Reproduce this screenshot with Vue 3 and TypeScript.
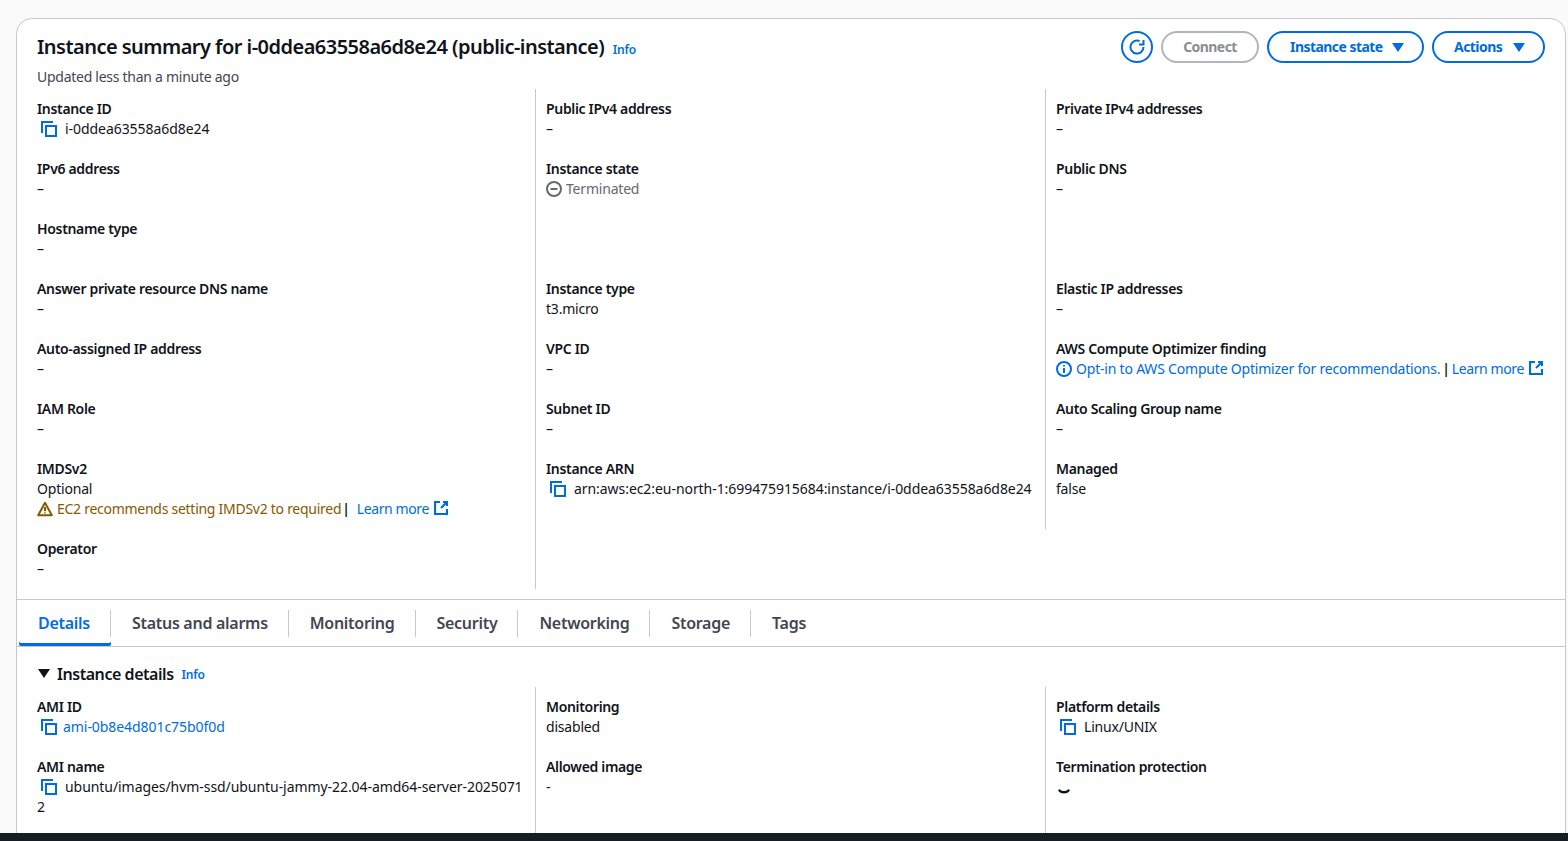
<template>
  <div class="page">
    <main class="main">
      <section class="card">
        <header class="head">
          <div>
            <h1 class="title">
              Instance summary for i-0ddea63558a6d8e24 (public-instance)
              <a class="info">Info</a>
            </h1>
            <p class="updated">Updated less than a minute ago</p>
          </div>
          <div class="actions">
            <button class="btn btn-icon" aria-label="Refresh">
              <svg width="16" height="16" viewBox="0 0 16 16" fill="none" stroke="currentColor" stroke-width="2">
                <path d="M10.6 2.1A6.5 6.5 0 1 0 14.5 8" />
                <path d="M14.5 1v4.5H10" />
              </svg>
            </button>
            <button class="btn btn-off">Connect</button>
            <button class="btn btn-menu btn-state">Instance state <i class="caret"></i></button>
            <button class="btn btn-menu btn-more">Actions <i class="caret"></i></button>
          </div>
        </header>

        <div class="grid summary">
          <div class="col col-first">
            <div class="field">
              <div class="label">Instance ID</div>
              <div class="value code"><svg class="copy" viewBox="0 0 16 16"><path d="M1 12V1h11" /><path d="M5 5h10v10H5z" /></svg>i-0ddea63558a6d8e24</div>
            </div>
            <div v-for="f in col1" :key="f" class="field">
              <div class="label">{{ f }}</div>
              <div class="value">–</div>
            </div>
            <div class="field">
              <div class="label">IMDSv2</div>
              <div class="value">Optional</div>
              <div class="value warn">
                <svg class="state" viewBox="0 0 16 16" fill="none" stroke="currentColor" stroke-width="2" stroke-linejoin="round">
                  <path d="M8 1.8 1.2 14.2h13.6z" />
                  <path d="M8 6v4.2M8 11.4v1.2" />
                </svg>
                <span class="warn-text">EC2 recommends setting IMDSv2 to required</span>
                <span class="pipe pipe-wide">|</span>
                <a class="link more">Learn more</a>
                <svg class="ext" viewBox="1 1 14 14" fill="none" stroke="currentColor" stroke-width="2.2"><path d="M7 2H2v12h12V9" /><path d="M10 2h4v4M14 2 8 8" /></svg>
              </div>
            </div>
            <div class="field">
              <div class="label">Operator</div>
              <div class="value">–</div>
            </div>
          </div>

          <div class="col">
            <div class="field">
              <div class="label">Public IPv4 address</div>
              <div class="value">–</div>
            </div>
            <div class="field">
              <div class="label">Instance state</div>
              <div class="value muted">
                <svg class="state" viewBox="0 0 16 16" fill="none" stroke="currentColor" stroke-width="2"><circle cx="8" cy="8" r="7" /><path d="M4.5 8h7" /></svg>
                <span class="state-text">Terminated</span>
              </div>
            </div>
            <div class="field field-blank"></div>
            <div class="field">
              <div class="label">Instance type</div>
              <div class="value">t3.micro</div>
            </div>
            <div class="field">
              <div class="label">VPC ID</div>
              <div class="value">–</div>
            </div>
            <div class="field">
              <div class="label">Subnet ID</div>
              <div class="value">–</div>
            </div>
            <div class="field">
              <div class="label">Instance ARN</div>
              <div class="value code"><svg class="copy" viewBox="0 0 16 16"><path d="M1 12V1h11" /><path d="M5 5h10v10H5z" /></svg>arn:aws:ec2:eu-north-1:699475915684:instance/i-0ddea63558a6d8e24</div>
            </div>
          </div>

          <div class="col col-short">
            <div class="field">
              <div class="label">Private IPv4 addresses</div>
              <div class="value">–</div>
            </div>
            <div class="field">
              <div class="label">Public DNS</div>
              <div class="value">–</div>
            </div>
            <div class="field field-blank"></div>
            <div class="field">
              <div class="label">Elastic IP addresses</div>
              <div class="value">–</div>
            </div>
            <div class="field">
              <div class="label">AWS Compute Optimizer finding</div>
              <div class="value opt">
                <svg class="state" viewBox="0 0 16 16" fill="none" stroke="currentColor" stroke-width="2"><circle cx="8" cy="8" r="7" /><path d="M8 7v5M8 4v1.6" /></svg>
                <a class="link opt-text">Opt-in to AWS Compute Optimizer for recommendations.</a>
                <span class="pipe">|</span>
                <a class="link more">Learn more</a>
                <svg class="ext" viewBox="1 1 14 14" fill="none" stroke="currentColor" stroke-width="2.2"><path d="M7 2H2v12h12V9" /><path d="M10 2h4v4M14 2 8 8" /></svg>
              </div>
            </div>
            <div class="field">
              <div class="label">Auto Scaling Group name</div>
              <div class="value">–</div>
            </div>
            <div class="field">
              <div class="label">Managed</div>
              <div class="value">false</div>
            </div>
          </div>
        </div>

        <nav class="tabs">
          <div v-for="(t, i) in tabs" :key="t" class="tab" :class="{ active: i === 0 }">
            <span class="tab-inner">{{ t }}</span>
          </div>
        </nav>

        <div class="section-head">
          <i class="section-caret"></i>
          <h2 class="section-title">Instance details</h2>
          <a class="info">Info</a>
        </div>

        <div class="grid details">
          <div class="col col-first">
            <div class="field">
              <div class="label">AMI ID</div>
              <div class="value code"><svg class="copy copy-tight" viewBox="0 0 16 16"><path d="M1 12V1h11" /><path d="M5 5h10v10H5z" /></svg><a class="link">ami-0b8e4d801c75b0f0d</a></div>
            </div>
            <div class="field">
              <div class="label">AMI name</div>
              <div class="value code wrap"><svg class="copy" viewBox="0 0 16 16"><path d="M1 12V1h11" /><path d="M5 5h10v10H5z" /></svg>ubuntu/images/hvm-ssd/ubuntu-jammy-22.04-amd64-server-20250712</div>
            </div>
          </div>
          <div class="col">
            <div class="field">
              <div class="label">Monitoring</div>
              <div class="value">disabled</div>
            </div>
            <div class="field">
              <div class="label">Allowed image</div>
              <div class="value">-</div>
            </div>
          </div>
          <div class="col">
            <div class="field">
              <div class="label">Platform details</div>
              <div class="value"><svg class="copy" viewBox="0 0 16 16"><path d="M1 12V1h11" /><path d="M5 5h10v10H5z" /></svg>Linux/UNIX</div>
            </div>
            <div class="field">
              <div class="label">Termination protection</div>
              <div class="value">
                <svg class="spin" viewBox="0 0 16 16" fill="none" stroke="currentColor" stroke-width="2.4" stroke-linecap="round"><path d="M3.5 9.5c2 2.4 7 2.4 9 0" /></svg>
              </div>
            </div>
          </div>
        </div>
      </section>
    </main>
    <footer class="foot"></footer>
  </div>
</template>

<script setup lang="ts">
const col1: string[] = [
  "IPv6 address",
  "Hostname type",
  "Answer private resource DNS name",
  "Auto-assigned IP address",
  "IAM Role",
];
const tabs: string[] = [
  "Details",
  "Status and alarms",
  "Monitoring",
  "Security",
  "Networking",
  "Storage",
  "Tags",
];
</script>

<style>
html,
body {
  margin: 0;
  overflow: hidden;
}
</style>

<style scoped>
.page {
  height: 100vh;
  display: flex;
  flex-direction: column;
  background: #fafafa;
  color: #0f141a;
  font-family: "Noto Sans", sans-serif;
  font-size: 14px;
  line-height: 20px;
  letter-spacing: -0.2px;
}
.main {
  flex: 1;
  min-height: 0;
  overflow: hidden;
  padding: 18px 2px 0 16px;
}
.card {
  background: #fff;
  border: 1px solid #c6c6cd;
  border-radius: 16px;
  padding-bottom: 60px;
}
.head {
  display: flex;
  justify-content: space-between;
  padding: 12px 20px 0 20px;
  height: 70px;
  box-sizing: border-box;
}
.title {
  margin: 0;
  font-size: 20px;
  line-height: 32px;
  font-weight: 650;
  letter-spacing: -0.53px;
}
.info {
  margin-left: 4px;
  font-size: 12px;
  font-weight: 650;
  color: #006ce0;
  letter-spacing: -0.2px;
}
.updated {
  margin: 1px 0 0;
  color: #424650;
  letter-spacing: -0.27px;
}
.actions {
  display: flex;
  gap: 8px;
  align-items: flex-start;
}
.btn {
  height: 32px;
  box-sizing: border-box;
  border: 2px solid #006ce0;
  border-radius: 16px;
  background: #fff;
  color: #006ce0;
  font: 700 14px/20px "Noto Sans", sans-serif;
  letter-spacing: -0.55px;
  display: flex;
  align-items: center;
  justify-content: center;
}
.btn-menu {
  justify-content: flex-start;
  padding: 0 18px 0 21px;
}
.btn-state {
  width: 157px;
}
.btn-more {
  width: 113px;
  padding-left: 20px;
}
.btn-icon {
  width: 32px;
  padding: 0;
}
.btn-off {
  width: 98px;
  border-color: #b4b4bb;
  color: #8c8c94;
  padding: 0;
}
.caret {
  width: 0;
  height: 0;
  margin-left: auto;
  border-left: 6px solid transparent;
  border-right: 6px solid transparent;
  border-top: 9px solid #006ce0;
}
.grid {
  display: grid;
  grid-template-columns: 498px 510px 1fr;
  padding-left: 20px;
}
.col {
  border-left: 1px solid #c6c6cd;
  padding: 10px;
  min-width: 0;
}
.col-first {
  border-left: 0;
  padding-left: 0;
}
.col-short {
  align-self: start;
  padding-bottom: 30px;
}
.details .col {
  padding-bottom: 30px;
}
.field + .field {
  margin-top: 20px;
}
.field-blank {
  height: 40px;
}
.label {
  font-weight: 650;
  letter-spacing: -0.33px;
}
.value {
  white-space: nowrap;
}
.code {
  letter-spacing: -0.06px;
}
.wrap {
  white-space: normal;
  word-break: break-all;
}
.copy {
  display: inline-block;
  width: 16px;
  height: 16px;
  margin: 0 8px 0 4px;
  vertical-align: -3px;
  fill: none;
  stroke: #006ce0;
  stroke-width: 2;
}
.copy-tight {
  margin-right: 6px;
}
.state {
  display: inline-block;
  width: 16px;
  height: 16px;
  vertical-align: -3px;
}
.state-text {
  margin-left: 4px;
}
.muted {
  color: #656871;
}
.warn {
  color: #855900;
}
.warn-text {
  margin-left: 4px;
  letter-spacing: -0.27px;
}
.link {
  color: #006ce0;
}
.more {
  letter-spacing: -0.4px;
}
.pipe {
  color: #0f141a;
  margin: 0 2px 0 2px;
  font-weight: 600;
}
.pipe-wide {
  margin: 0 7px 0 1px;
}
.ext {
  display: inline-block;
  width: 14px;
  height: 14px;
  margin-left: 5px;
  vertical-align: -1px;
  color: #006ce0;
}
.opt {
  color: #006ce0;
}
.opt .opt-text {
  margin-left: 4px;
}
.spin {
  display: block;
  width: 16px;
  height: 16px;
  margin: 4px 0 0 0;
}
.tabs {
  display: flex;
  height: 48px;
  box-sizing: border-box;
  margin-top: 10px;
  padding-left: 2px;
  border-top: 1px solid #c6c6cd;
  border-bottom: 1px solid #c6c6cd;
}
.tab {
  display: flex;
  align-items: center;
  height: 46px;
  box-sizing: border-box;
  font-size: 16px;
  font-weight: 650;
  letter-spacing: -0.28px;
  color: #424650;
}
.tab-inner {
  padding: 0 20px 0 21px;
  height: 27px;
  line-height: 27px;
  border-right: 1px solid #c6c6cd;
}
.tab:first-child .tab-inner {
  padding: 0 20px 0 19px;
}
.tab:last-child .tab-inner {
  border-right: 0;
}
.tab.active {
  color: #006ce0;
  box-shadow: inset 0 -3px 0 #006ce0;
  border-radius: 0 0 2px 2px;
}
.section-head {
  display: flex;
  align-items: center;
  height: 40px;
  padding-left: 21px;
  padding-top: 13px;
  box-sizing: border-box;
}
.section-caret {
  width: 0;
  height: 0;
  border-left: 6px solid transparent;
  border-right: 6px solid transparent;
  border-top: 9px solid #0f141a;
  margin-right: 7px;
}
.section-title {
  margin: 0;
  font-size: 16px;
  line-height: 20px;
  font-weight: 650;
  letter-spacing: -0.45px;
}
.section-head .info {
  margin-left: 8px;
  margin-top: 3px;
}
.foot {
  height: 8px;
  background: #161d26;
}
</style>
